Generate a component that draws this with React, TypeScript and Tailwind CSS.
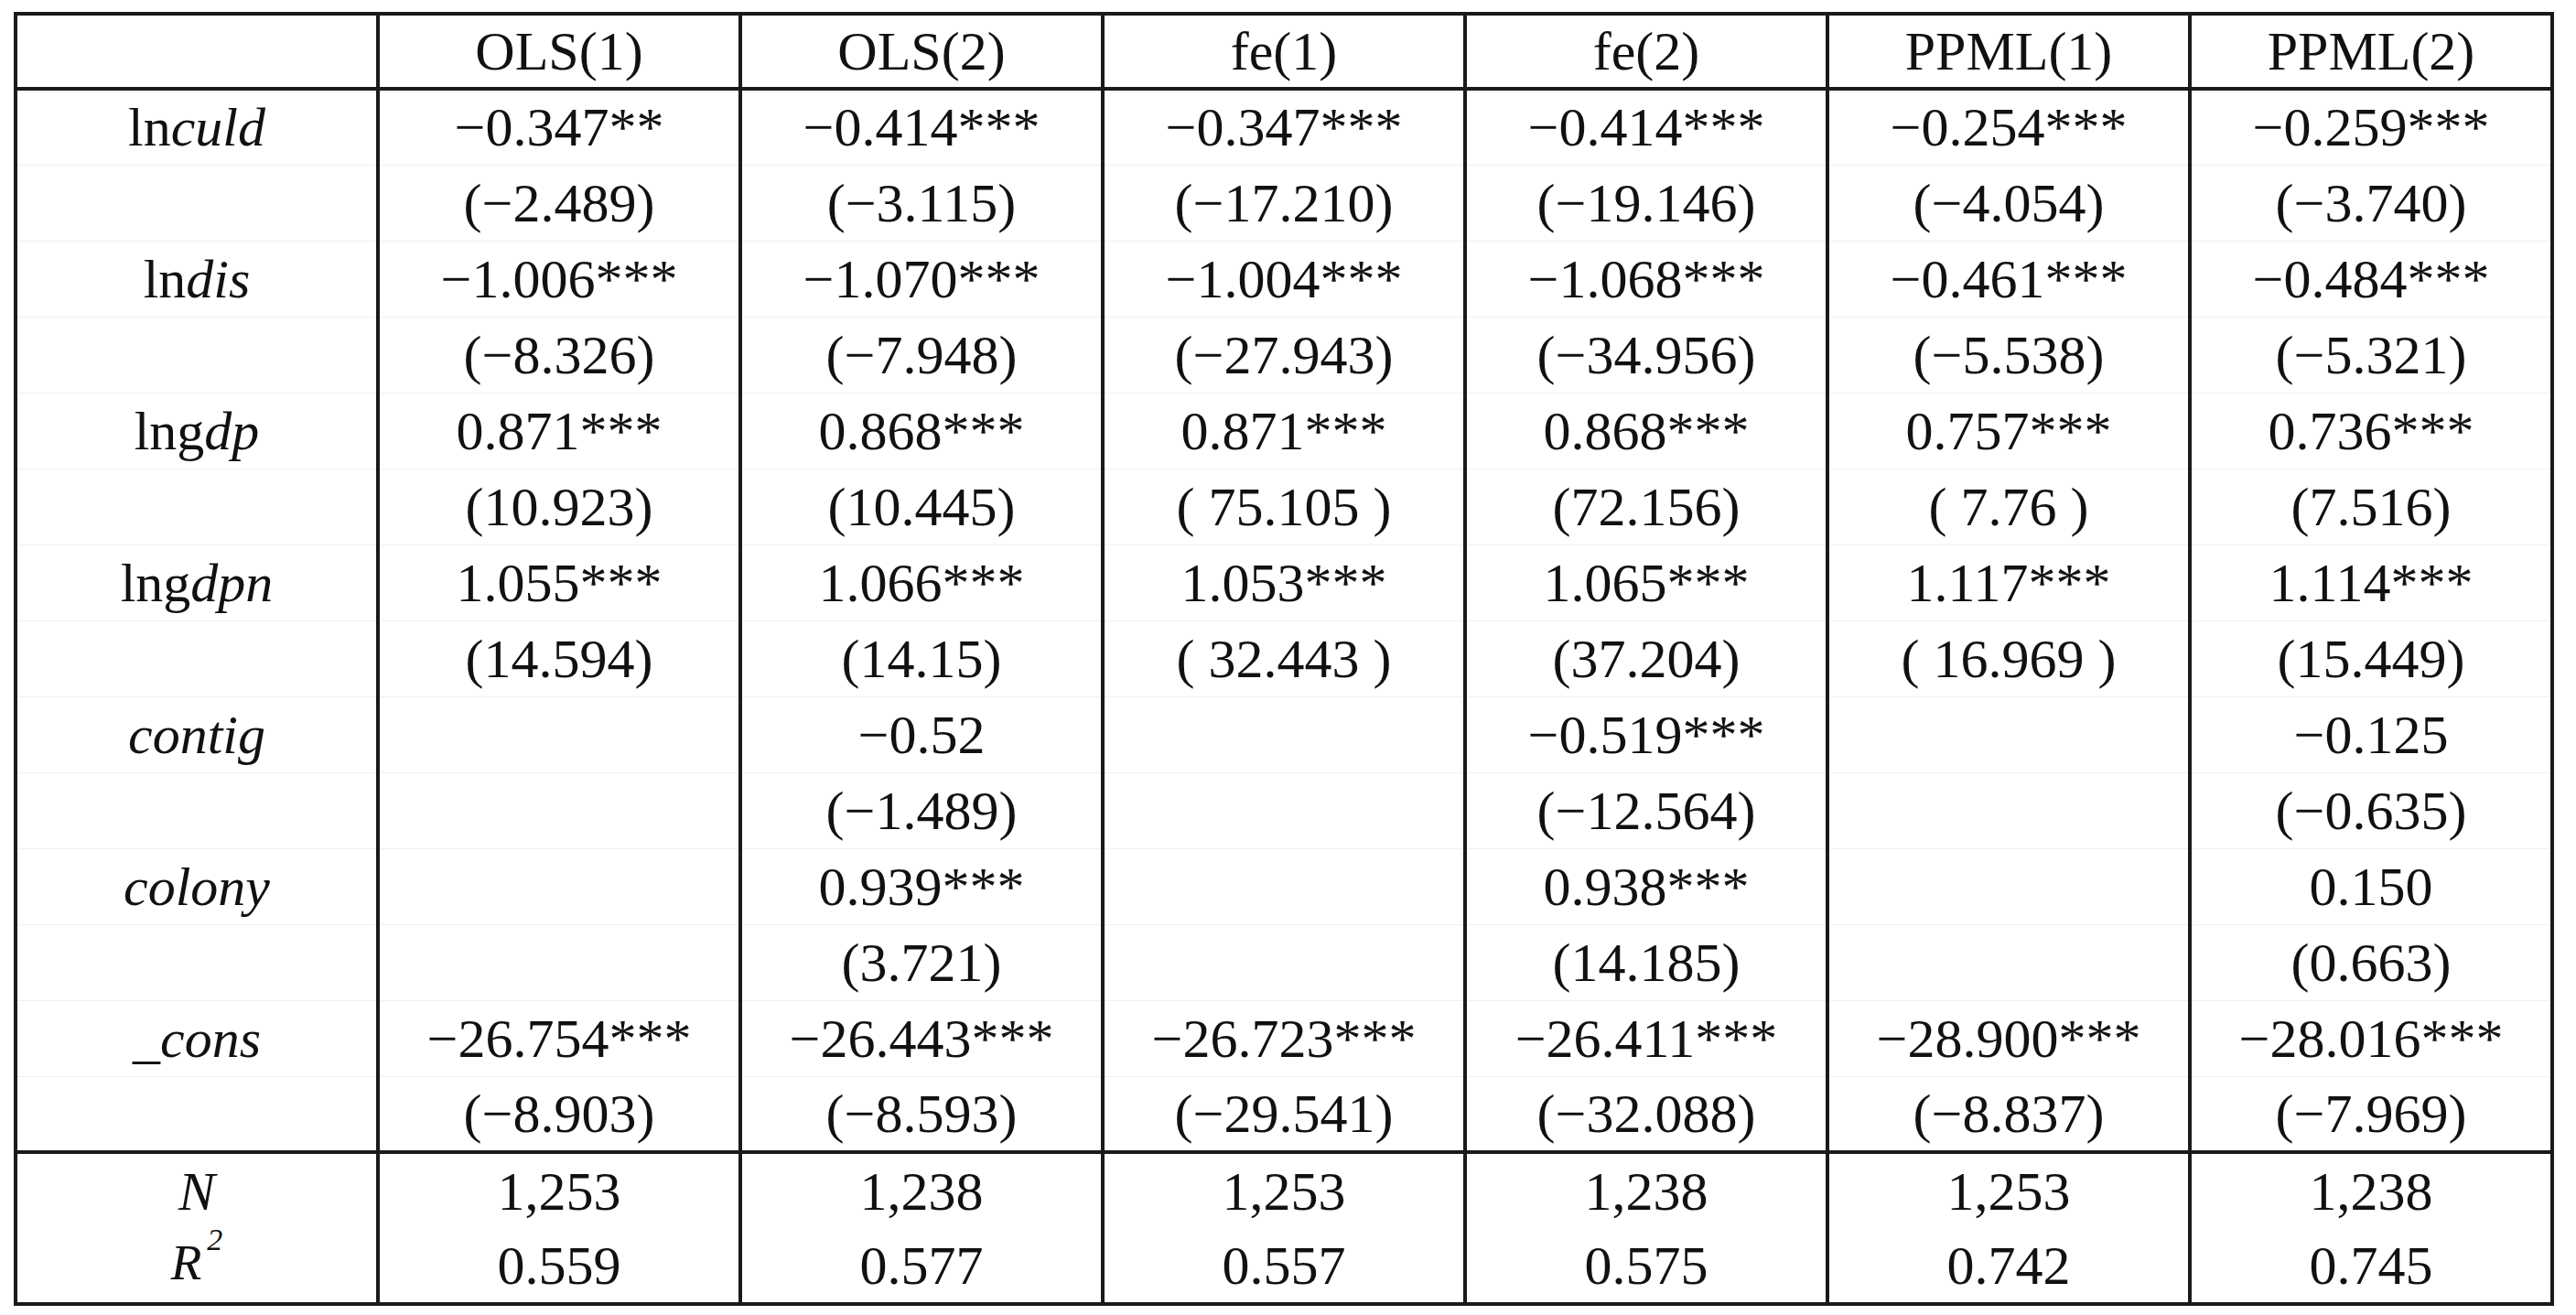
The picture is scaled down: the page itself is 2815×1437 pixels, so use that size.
import React from 'react';

type Row = {
  label: React.ReactNode;
  coef: string[];
  t: string[];
};

const heads = ['OLS(1)', 'OLS(2)', 'fe(1)', 'fe(2)', 'PPML(1)', 'PPML(2)'];

const rows: Row[] = [
  {
    label: <>ln<i>culd</i></>,
    coef: ['−0.347**', '−0.414***', '−0.347***', '−0.414***', '−0.254***', '−0.259***'],
    t: ['(−2.489)', '(−3.115)', '(−17.210)', '(−19.146)', '(−4.054)', '(−3.740)'],
  },
  {
    label: <>ln<i>dis</i></>,
    coef: ['−1.006***', '−1.070***', '−1.004***', '−1.068***', '−0.461***', '−0.484***'],
    t: ['(−8.326)', '(−7.948)', '(−27.943)', '(−34.956)', '(−5.538)', '(−5.321)'],
  },
  {
    label: <>lng<i>dp</i></>,
    coef: ['0.871***', '0.868***', '0.871***', '0.868***', '0.757***', '0.736***'],
    t: ['(10.923)', '(10.445)', '( 75.105 )', '(72.156)', '( 7.76 )', '(7.516)'],
  },
  {
    label: <>lng<i>dpn</i></>,
    coef: ['1.055***', '1.066***', '1.053***', '1.065***', '1.117***', '1.114***'],
    t: ['(14.594)', '(14.15)', '( 32.443 )', '(37.204)', '( 16.969 )', '(15.449)'],
  },
  {
    label: <i>contig</i>,
    coef: ['', '−0.52', '', '−0.519***', '', '−0.125'],
    t: ['', '(−1.489)', '', '(−12.564)', '', '(−0.635)'],
  },
  {
    label: <i>colony</i>,
    coef: ['', '0.939***', '', '0.938***', '', '0.150'],
    t: ['', '(3.721)', '', '(14.185)', '', '(0.663)'],
  },
  {
    label: <i>_cons</i>,
    coef: ['−26.754***', '−26.443***', '−26.723***', '−26.411***', '−28.900***', '−28.016***'],
    t: ['(−8.903)', '(−8.593)', '(−29.541)', '(−32.088)', '(−8.837)', '(−7.969)'],
  },
];

const obs = ['1,253', '1,238', '1,253', '1,238', '1,253', '1,238'];
const r2 = ['0.559', '0.577', '0.557', '0.575', '0.742', '0.745'];

// body cell: thick column rules, faint hairline between rows
const cell = 'h-[83px] p-0 text-center align-middle whitespace-pre border-x-4 border-x-[#1a1a1a] border-t border-t-[#efefef]';
const foot = 'h-[83px] p-0 text-center align-middle border-x-4 border-x-[#1a1a1a]';

const App: React.FC = () => {
  return (
    <div className="w-[2815px] h-[1437px] bg-white pt-[13px] pl-[15px] font-['Liberation_Serif',serif] text-[60px] leading-[66px] text-[#111]">
      <table className="w-[2772px] table-fixed border-collapse border-4 border-[#1a1a1a]">
        <colgroup>
          {Array.from({ length: 7 }).map((_, i) => (
            <col key={i} className="w-[396px]" />
          ))}
        </colgroup>
        <thead>
          <tr>
            <th className="h-[82px] p-0 font-normal border-4 border-[#1a1a1a]" />
            {heads.map((h) => (
              <th key={h} className="h-[82px] p-0 font-normal text-center align-middle border-4 border-[#1a1a1a]">
                {h}
              </th>
            ))}
          </tr>
        </thead>
        <tbody>
          {rows.map((r, i) => (
            <React.Fragment key={i}>
              <tr>
                <td className={cell}>{r.label}</td>
                {r.coef.map((c, j) => (
                  <td key={j} className={cell}>{c}</td>
                ))}
              </tr>
              <tr>
                <td className={cell} />
                {r.t.map((c, j) => (
                  <td key={j} className={cell}>{c}</td>
                ))}
              </tr>
            </React.Fragment>
          ))}
        </tbody>
        <tfoot>
          <tr>
            <td className={`${foot} border-t-4 border-t-[#1a1a1a]`}>
              <i>N</i>
            </td>
            {obs.map((c, j) => (
              <td key={j} className={`${foot} border-t-4 border-t-[#1a1a1a]`}>
                {c}
              </td>
            ))}
          </tr>
          <tr>
            <td className={`${foot} border-t-0`}>
              <i className="text-[55px]">R</i>
              <span className="relative top-[-32px] ml-[6px] text-[34px] italic">2</span>
            </td>
            {r2.map((c, j) => (
              <td key={j} className={`${foot} border-t-0`}>
                {c}
              </td>
            ))}
          </tr>
        </tfoot>
      </table>
    </div>
  );
};

export default App;
